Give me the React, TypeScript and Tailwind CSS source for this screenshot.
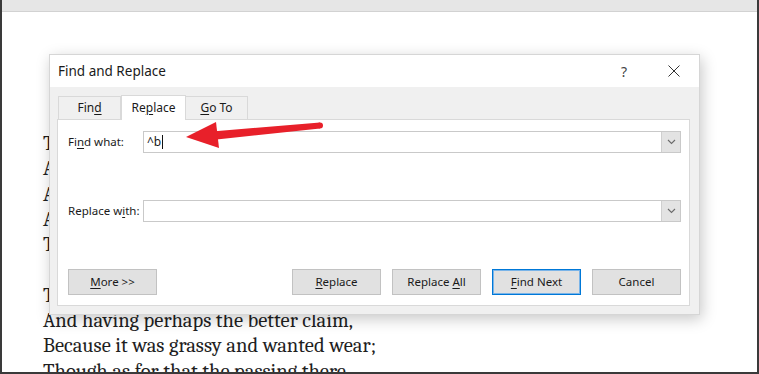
import React from 'react';

const ui = "font-['Segoe_UI','Noto_Sans',sans-serif]";

const poem = [
  'Two roads diverged in a yellow wood,',
  'And sorry I could not travel both',
  'And be one traveler, long I stood',
  'And looked down one as far as I could',
  'To where it bent in the undergrowth;',
  '\u00a0',
  'Then took the other, as just as fair,',
  'And having perhaps the better claim,',
  'Because it was grassy and wanted wear;',
  'Though as for that the passing there',
];

function Chevron() {
  return (
    <svg width="9" height="6" viewBox="0 0 9 6" fill="none">
      <path d="M1 1l3.5 3.5L8 1" stroke="#6b6b6b" strokeWidth="1.1" />
    </svg>
  );
}

function Combo({ value, caret }: { value?: string; caret?: boolean }) {
  return (
    <div className="flex-1 h-[22px] flex items-stretch bg-white border border-[#c9c9c9]">
      <div className="flex-1 flex items-center pl-[3px] text-[12px] text-[#1a1a1a]">
        <span>{value}</span>
        {caret && <span className="ml-[1px] w-px h-[14px] bg-[#111]" />}
      </div>
      <div className="w-[19px] flex items-center justify-center bg-[#e3e3e3] border-l border-[#cfcfcf]">
        <Chevron />
      </div>
    </div>
  );
}

function Btn({ children, primary }: { children: React.ReactNode; primary?: boolean }) {
  return (
    <div
      className={`w-[89px] h-[26px] flex items-center justify-center text-[11.5px] text-[#1a1a1a] bg-[#e1e1e1] border ${
        primary ? 'border-[#0078d7] shadow-[inset_0_0_0_1px_#7ab4e8]' : 'border-[#c2c2c2]'
      }`}
    >
      <span>{children}</span>
    </div>
  );
}

function Arrow() {
  return (
    <svg className="absolute left-[-2px] top-0 pointer-events-none" width="759" height="374">
      <polygon points="212,131.5 320,122.5 320,128.5 212,140" fill="#e8202a" />
      <circle cx="320" cy="125.5" r="3" fill="#e8202a" />
      <polygon points="186,137 216,122 219,148" fill="#e8202a" />
    </svg>
  );
}

function Dialog() {
  return (
    <div className={`absolute left-[47px] top-[54px] w-[651px] h-[261px] flex flex-col bg-[#f0f0f0] border border-[#d6d6d6] shadow-[2px_4px_14px_rgba(0,0,0,0.22)] ${ui}`}>
      <div className="h-[32px] shrink-0 bg-white flex items-center pl-[8px] pr-[19px]">
        <span className="text-[13.5px] text-[#1a1a1a]">Find and Replace</span>
        <span className="ml-auto text-[14px] text-[#444]">?</span>
        <svg className="ml-[41px]" width="12" height="12" viewBox="0 0 12 12">
          <path d="M0.5 0.5l11 11M11.5 0.5l-11 11" stroke="#333" strokeWidth="1" />
        </svg>
      </div>

      <div className="pt-[8px] pl-[7px] pr-[9px]">
        <div className="flex items-end h-[24px] ml-[1px] text-[12px] text-[#1a1a1a]">
          <div className="w-[63px] h-[23px] flex items-center justify-center border border-b-0 border-[#d9d9d9]">
            <span>
              Fin<u className="underline-offset-2">d</u>
            </span>
          </div>
          <div className="w-[65px] h-[25px] -mb-px relative z-10 flex items-center justify-center bg-white border border-b-0 border-[#d9d9d9]">
            <span>
              Re<u className="underline-offset-2">p</u>lace
            </span>
          </div>
          <div className="w-[62px] h-[23px] flex items-center justify-center border border-b-0 border-l-0 border-[#d9d9d9]">
            <span>
              <u className="underline-offset-2">G</u>o To
            </span>
          </div>
        </div>

        <div className="h-[187px] bg-white border border-[#d9d9d9] pt-[11px] pl-[10px] pr-[8px] text-[11.5px] text-[#1a1a1a]">
          <div className="flex items-center">
            <span className="w-[75px]">
              Fi<u className="underline-offset-2">n</u>d what:
            </span>
            <Combo value="^b" caret />
          </div>
          <div className="flex items-center mt-[47px]">
            <span className="w-[75px]">
              Replace w<u className="underline-offset-2">i</u>th:
            </span>
            <Combo />
          </div>
          <div className="flex items-center justify-between mt-[47px]">
            <Btn>
              <u className="underline-offset-2">M</u>ore &gt;&gt;
            </Btn>
            <div className="flex gap-[11px]">
              <Btn>
                <u className="underline-offset-2">R</u>eplace
              </Btn>
              <Btn>
                Replace <u className="underline-offset-2">A</u>ll
              </Btn>
              <Btn primary>
                <u className="underline-offset-2">F</u>ind Next
              </Btn>
              <Btn>Cancel</Btn>
            </div>
          </div>
        </div>
      </div>
    </div>
  );
}

export default function App() {
  return (
    <div className="relative w-[759px] h-[374px] overflow-hidden bg-white border-l-2 border-r-2 border-b-2 border-[#3a3a3a]">
      <div className="h-[12px] bg-[#e6e6e6] border-b border-[#d2d2d2]" />
      <div className="pl-[41px] pt-[119px] font-['Cambria','Liberation_Serif',serif] text-[20.6px] leading-[25.3px] text-[#1f1f1f] whitespace-nowrap">
        {poem.map((line, i) => (
          <div key={i}>{line}</div>
        ))}
      </div>
      <Dialog />
      <Arrow />
    </div>
  );
}
